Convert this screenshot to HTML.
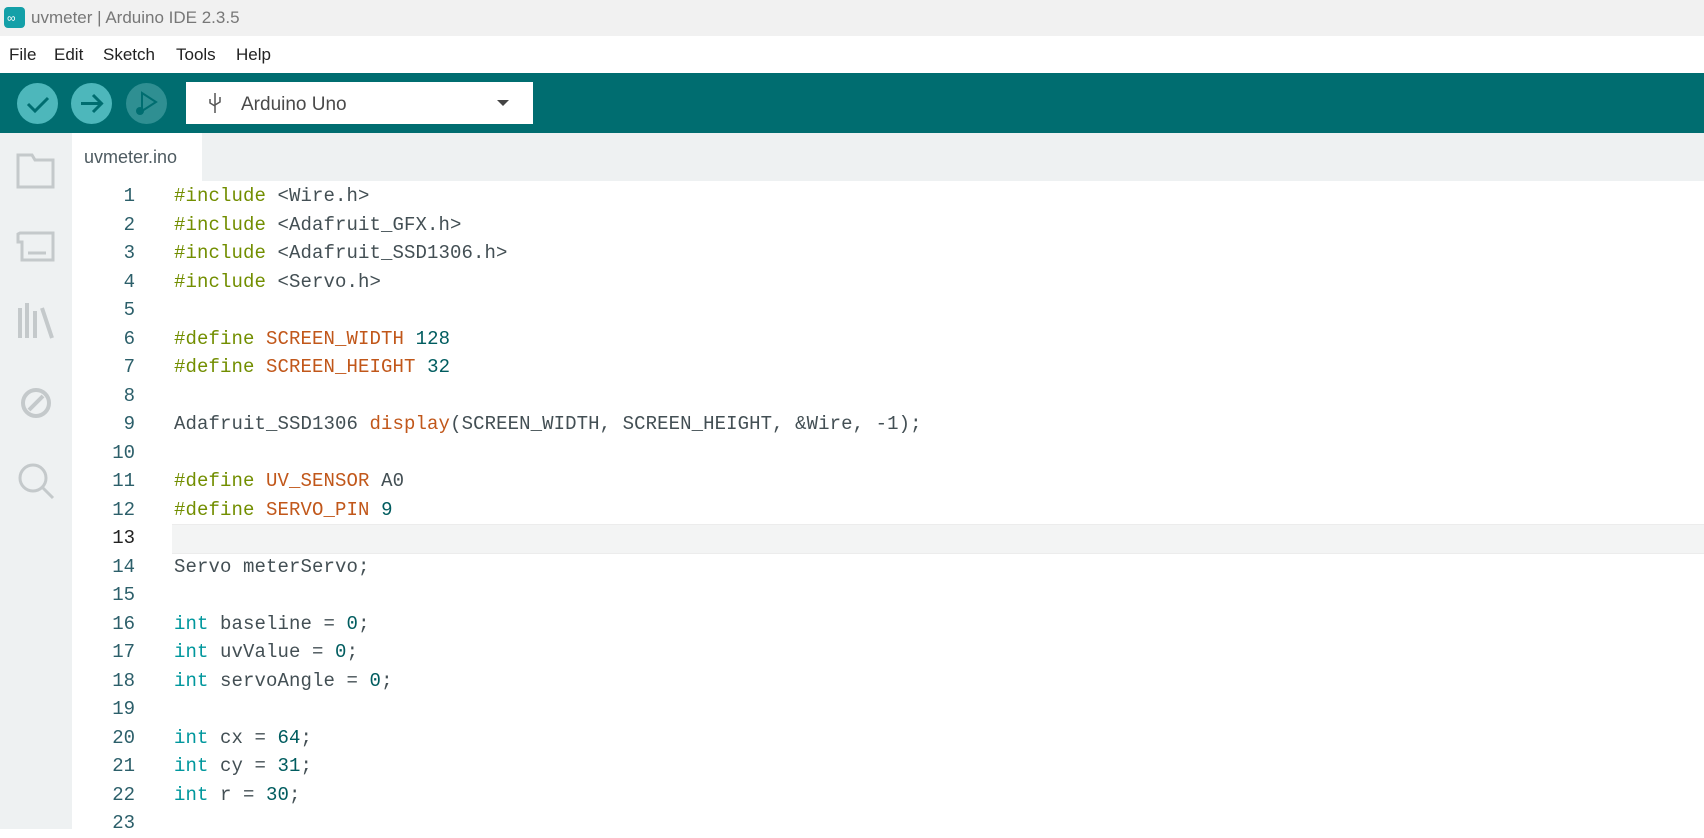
<!DOCTYPE html>
<html><head><meta charset="utf-8"><style>
body{margin:0;width:1704px;height:829px;overflow:hidden;background:#fff;font-family:"Liberation Sans",sans-serif;position:relative}
.title{position:absolute;left:0;top:0;width:1704px;height:36px;background:#f1f1f1;color:#777;font-size:17px}
.title span{position:absolute;left:31px;top:8px}
.logo{position:absolute;left:4px;top:7px;width:21px;height:21px;border-radius:4px;background:#14a0a8}
.menu{position:absolute;left:0;top:36px;width:1704px;height:37px;background:#fff;font-size:17px;color:#222}
.menu span{position:absolute;top:9px}
.tb{position:absolute;left:0;top:73px;width:1704px;height:60px;background:#006d70}
.btn{position:absolute;top:83px;width:41px;height:41px;border-radius:50%;background:#4db7bb}
.dd{position:absolute;left:186px;top:82px;width:347px;height:42px;background:#fff}
.side{position:absolute;left:0;top:133px;width:72px;height:696px;background:#eef1f2}
.tabbar{position:absolute;left:72px;top:133px;width:1632px;height:48px;background:#eef1f2}
.tab{position:absolute;left:72px;top:133px;width:130px;height:48px;background:#fff;font-size:18px;color:#4e5b61}
.tab span{position:absolute;left:12px;top:14px}
.code{position:absolute;left:0;top:182px;font-family:"Liberation Mono",monospace;font-size:19px;letter-spacing:0.1px}
.l{position:absolute;height:28.5px;line-height:28.5px;white-space:pre;color:#434f54}
.n{position:absolute;width:135px;text-align:right;height:28.5px;line-height:28.5px;color:#2c5f6a;letter-spacing:0}
.k{color:#728e00}.o{color:#c1571a}.d{color:#005c5f}.t{color:#00979d}
.hl{position:absolute;left:172px;top:524px;width:1532px;height:28px;background:#f3f4f4;border-top:1px solid #ececec;border-bottom:1px solid #ececec}
</style></head><body>
<div class="title"><div class="logo"><svg width="21" height="21"><text x="3" y="15" fill="#fff" font-size="12">∞</text></svg></div><span>uvmeter | Arduino IDE 2.3.5</span></div>
<div class="menu"><span style="left:9px">File</span><span style="left:54px">Edit</span><span style="left:103px">Sketch</span><span style="left:176px">Tools</span><span style="left:236px">Help</span></div>
<div class="tb"></div>
<div class="btn" style="left:17px"><svg width="41" height="41"><path d="M11 21l7 7 13-13" stroke="#006d70" stroke-width="3" fill="none"/></svg></div>
<div class="btn" style="left:71px"><svg width="41" height="41"><path d="M10 20.5h20M22 12l8.5 8.5L22 29" stroke="#006d70" stroke-width="3" fill="none"/></svg></div>
<div class="btn" style="left:126px;background:#2f8f92"><svg width="41" height="41"><path d="M16 10v18l14-9z" stroke="#006d70" stroke-width="2" fill="none"/><circle cx="14" cy="28" r="4" fill="#006d70"/></svg></div>
<div class="dd"><svg width="347" height="42"><path d="M29 11v20M24 17v4l5 3M34 15v5l-5 3" stroke="#555" stroke-width="1.5" fill="none"/><text x="55" y="28" font-size="19" fill="#4a4a4a" font-family="Liberation Sans">Arduino Uno</text><path d="M311 18h12l-6 6z" fill="#444"/></svg></div>
<div class="side"><svg width="72" height="400">
<path d="M18 22h14l3 5h18v27H18z" fill="none" stroke="#c4c9cb" stroke-width="3"/>
<path d="M20 100h33v27H22v-18h-4v-8z M28 120h18" fill="none" stroke="#c4c9cb" stroke-width="3"/>
<path d="M20 175v30M27 170v35M35 178v27M42 175l10 30" fill="none" stroke="#c4c9cb" stroke-width="4"/>
<circle cx="36" cy="270" r="13" fill="none" stroke="#c4c9cb" stroke-width="4"/><path d="M29 277l14-14" stroke="#c4c9cb" stroke-width="4"/>
<circle cx="33" cy="345" r="13" fill="none" stroke="#c4c9cb" stroke-width="3"/><path d="M42 354l11 11" stroke="#c4c9cb" stroke-width="3"/>
</svg></div>
<div class="tabbar"></div>
<div class="tab"><span>uvmeter.ino</span></div>
<div class="hl"></div>
<div class="code">
<div class="n" style="top:0">1</div><div class="l" style="left:174px;top:0"><span class="k">#include</span> &lt;Wire.h&gt;</div>
<div class="n" style="top:28.5px">2</div><div class="l" style="left:174px;top:28.5px"><span class="k">#include</span> &lt;Adafruit_GFX.h&gt;</div>
<div class="n" style="top:57px">3</div><div class="l" style="left:174px;top:57px"><span class="k">#include</span> &lt;Adafruit_SSD1306.h&gt;</div>
<div class="n" style="top:85.5px">4</div><div class="l" style="left:174px;top:85.5px"><span class="k">#include</span> &lt;Servo.h&gt;</div>
<div class="n" style="top:114px">5</div>
<div class="n" style="top:142.5px">6</div><div class="l" style="left:174px;top:142.5px"><span class="k">#define</span> <span class="o">SCREEN_WIDTH</span> <span class="d">128</span></div>
<div class="n" style="top:171px">7</div><div class="l" style="left:174px;top:171px"><span class="k">#define</span> <span class="o">SCREEN_HEIGHT</span> <span class="d">32</span></div>
<div class="n" style="top:199.5px">8</div>
<div class="n" style="top:228px">9</div><div class="l" style="left:174px;top:228px">Adafruit_SSD1306 <span class="o">display</span>(SCREEN_WIDTH, SCREEN_HEIGHT, &amp;Wire, -1);</div>
<div class="n" style="top:256.5px">10</div>
<div class="n" style="top:285px">11</div><div class="l" style="left:174px;top:285px"><span class="k">#define</span> <span class="o">UV_SENSOR</span> A0</div>
<div class="n" style="top:313.5px">12</div><div class="l" style="left:174px;top:313.5px"><span class="k">#define</span> <span class="o">SERVO_PIN</span> <span class="d">9</span></div>
<div class="n" style="top:342px;color:#222">13</div>
<div class="n" style="top:370.5px">14</div><div class="l" style="left:174px;top:370.5px">Servo meterServo;</div>
<div class="n" style="top:399px">15</div>
<div class="n" style="top:427.5px">16</div><div class="l" style="left:174px;top:427.5px"><span class="t">int</span> baseline = <span class="d">0</span>;</div>
<div class="n" style="top:456px">17</div><div class="l" style="left:174px;top:456px"><span class="t">int</span> uvValue = <span class="d">0</span>;</div>
<div class="n" style="top:484.5px">18</div><div class="l" style="left:174px;top:484.5px"><span class="t">int</span> servoAngle = <span class="d">0</span>;</div>
<div class="n" style="top:513px">19</div>
<div class="n" style="top:541.5px">20</div><div class="l" style="left:174px;top:541.5px"><span class="t">int</span> cx = <span class="d">64</span>;</div>
<div class="n" style="top:570px">21</div><div class="l" style="left:174px;top:570px"><span class="t">int</span> cy = <span class="d">31</span>;</div>
<div class="n" style="top:598.5px">22</div><div class="l" style="left:174px;top:598.5px"><span class="t">int</span> r = <span class="d">30</span>;</div>
<div class="n" style="top:627px">23</div>
</div>
</body></html>
